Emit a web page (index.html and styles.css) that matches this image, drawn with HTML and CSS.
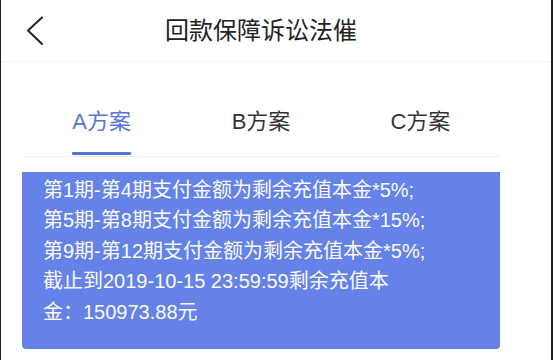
FILE: index.html
```html
<!DOCTYPE html>
<html lang="zh-CN">
<head>
<meta charset="utf-8">
<title>回款保障诉讼法催</title>
<link rel="stylesheet" href="styles.css">
</head>
<body>
<div class="page">
  <header class="header">
    <div class="back">
      <svg width="18" height="30" viewBox="0 0 18 30">
        <polyline points="16,1.5 2,14.5 16,28" fill="none" stroke="#222" stroke-width="2" stroke-linecap="round" stroke-linejoin="round"/>
      </svg>
    </div>
    <h1 class="title">回款保障诉讼法催</h1>
  </header>
  <nav class="tabs">
    <div class="tab active"><span class="label">A方案</span><span class="bar"></span></div>
    <div class="tab"><span class="label">B方案</span><span class="bar"></span></div>
    <div class="tab"><span class="label">C方案</span><span class="bar"></span></div>
  </nav>
  <section class="plan">
    <div class="line">第1期-第4期支付金额为剩余充值本金*5%;</div>
    <div class="line">第5期-第8期支付金额为剩余充值本金*15%;</div>
    <div class="line">第9期-第12期支付金额为剩余充值本金*5%;</div>
    <div class="line">截止到2019-10-15 23:59:59剩余充值本</div>
    <div class="line">金：150973.88元</div>
  </section>
</div>
</body>
</html>
```
FILE: styles.css
```css
html, body {
  margin: 0;
  padding: 0;
  background: #fff;
}
body {
  width: 553px;
  height: 360px;
  overflow: hidden;
  font-family: "Liberation Sans", "Noto Sans CJK SC", sans-serif;
}
.page {
  box-sizing: border-box;
  width: 553px;
  height: 360px;
  border-left: 1px solid #1e1e1e;
  border-right: 2px solid #1e1e1e;
  background: #fff;
}
.header {
  display: flex;
  align-items: center;
  height: 61px;
  border-bottom: 1px solid #f0f0f0;
}
.back {
  width: 60px;
  box-sizing: border-box;
  padding-left: 25px;
  display: flex;
  align-items: center;
}
.back svg { display: block; }
.title {
  flex: 1;
  margin: 0;
  padding-right: 90px;
  text-align: center;
  font-size: 24px;
  font-weight: normal;
  color: #222;
  line-height: 30px;
}
.tabs {
  display: flex;
  width: 478px;
  margin-left: 21px;
  padding-top: 45px;
  border-bottom: 1px solid #efefef;
}
.tab {
  flex: 1;
  display: flex;
  flex-direction: column;
  align-items: center;
}
.label {
  display: inline-block;
  font-size: 22px;
  line-height: 30px;
  color: #333;
  margin-bottom: 15px;
}
.bar {
  display: block;
  width: 59px;
  height: 3px;
  margin-bottom: 1px;
  border-radius: 1px;
  background: transparent;
}
.tab.active .label { color: #5a74d4; }
.tab.active .bar { background: #5a74d4; }
.plan {
  width: 478px;
  box-sizing: border-box;
  margin: 15px 0 0 21px;
  padding: 3px 0 22px 21px;
  background: #6482e8;
  border-radius: 0 0 4px 4px;
  color: #fbfcff;
  font-size: 20px;
  line-height: 30.4px;
  white-space: nowrap;
}
```
